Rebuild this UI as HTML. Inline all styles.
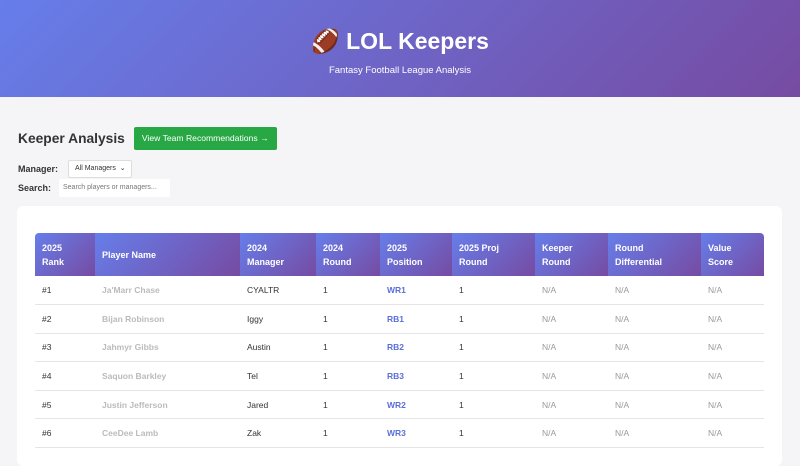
<!DOCTYPE html>
<html><head><meta charset="utf-8"><style>
*{margin:0;padding:0;box-sizing:border-box}
body{width:800px;height:450px;overflow:hidden;background:#f5f5f7;font-family:"Liberation Sans","DejaVu Sans",sans-serif;color:#333}
.hdr{height:97px;background:linear-gradient(135deg,#667eea,#764ba2);color:#fff;text-align:center}
.hdr h1{font-size:23px;font-weight:bold;padding-top:26px;line-height:30px}
.hdr p{font-size:9.5px;margin-top:9px}
.sec{position:absolute;left:18px;top:127px;display:flex;align-items:center}
.sec h2{font-size:13.8px;font-weight:bold;color:#333}
.btn{margin-left:9px;background:#28a745;color:#fff;font-size:8.6px;padding:0 8px;height:23px;line-height:23px;border-radius:2px}
.lbl{position:absolute;left:18px;font-size:9px;font-weight:bold}
.sel{position:absolute;left:68px;top:160px;width:64px;height:18px;background:#fff;border:1px solid #ddd;border-radius:2px;font-size:7px;line-height:16px;padding-left:6px}
.inp{position:absolute;left:59px;top:179px;width:111px;height:18px;background:#fff;border-radius:2px;font-size:7px;line-height:18px;padding-left:4px;color:#777}
.card{position:absolute;left:17px;top:206px;width:765px;height:260px;background:#fff;border-radius:6px}
table{position:absolute;left:35px;top:233px;width:729px;border-collapse:collapse;font-size:8.5px}
th{background:linear-gradient(135deg,#667eea,#764ba2);color:#fff;text-align:left;font-weight:bold;height:43px;padding:0 7px;line-height:14px;font-size:9px}
th:first-child{border-top-left-radius:4px}th:last-child{border-top-right-radius:4px}
td{height:28.6px;padding:0 7px;border-bottom:1px solid #e5e5e5;color:#333}
td.n{color:#bbb;font-weight:bold}td.p{color:#5a6fd8;font-weight:bold}td.g{color:#999}
</style></head><body>
<div class="hdr"><h1>🏈 LOL Keepers</h1><p>Fantasy Football League Analysis</p></div>
<div class="sec"><h2>Keeper Analysis</h2><div class="btn">View Team Recommendations →</div></div>
<div class="lbl" style="top:164px">Manager:</div><div class="sel">All Managers &nbsp;⌄</div>
<div class="lbl" style="top:183px">Search:</div><div class="inp">Search players or managers...</div>
<div class="card"></div>
<table>
<colgroup><col style="width:60px"><col style="width:145px"><col style="width:76px"><col style="width:64px"><col style="width:72px"><col style="width:83px"><col style="width:73px"><col style="width:93px"><col style="width:63px"></colgroup>
<tr><th>2025<br>Rank</th><th>Player Name</th><th>2024<br>Manager</th><th>2024<br>Round</th><th>2025<br>Position</th><th>2025 Proj<br>Round</th><th>Keeper<br>Round</th><th>Round<br>Differential</th><th>Value<br>Score</th></tr>
<tr><td>#1</td><td class="n">Ja'Marr Chase</td><td>CYALTR</td><td>1</td><td class="p">WR1</td><td>1</td><td class="g">N/A</td><td class="g">N/A</td><td class="g">N/A</td></tr>
<tr><td>#2</td><td class="n">Bijan Robinson</td><td>Iggy</td><td>1</td><td class="p">RB1</td><td>1</td><td class="g">N/A</td><td class="g">N/A</td><td class="g">N/A</td></tr>
<tr><td>#3</td><td class="n">Jahmyr Gibbs</td><td>Austin</td><td>1</td><td class="p">RB2</td><td>1</td><td class="g">N/A</td><td class="g">N/A</td><td class="g">N/A</td></tr>
<tr><td>#4</td><td class="n">Saquon Barkley</td><td>Tel</td><td>1</td><td class="p">RB3</td><td>1</td><td class="g">N/A</td><td class="g">N/A</td><td class="g">N/A</td></tr>
<tr><td>#5</td><td class="n">Justin Jefferson</td><td>Jared</td><td>1</td><td class="p">WR2</td><td>1</td><td class="g">N/A</td><td class="g">N/A</td><td class="g">N/A</td></tr>
<tr><td>#6</td><td class="n">CeeDee Lamb</td><td>Zak</td><td>1</td><td class="p">WR3</td><td>1</td><td class="g">N/A</td><td class="g">N/A</td><td class="g">N/A</td></tr>
</table>
</body></html>
